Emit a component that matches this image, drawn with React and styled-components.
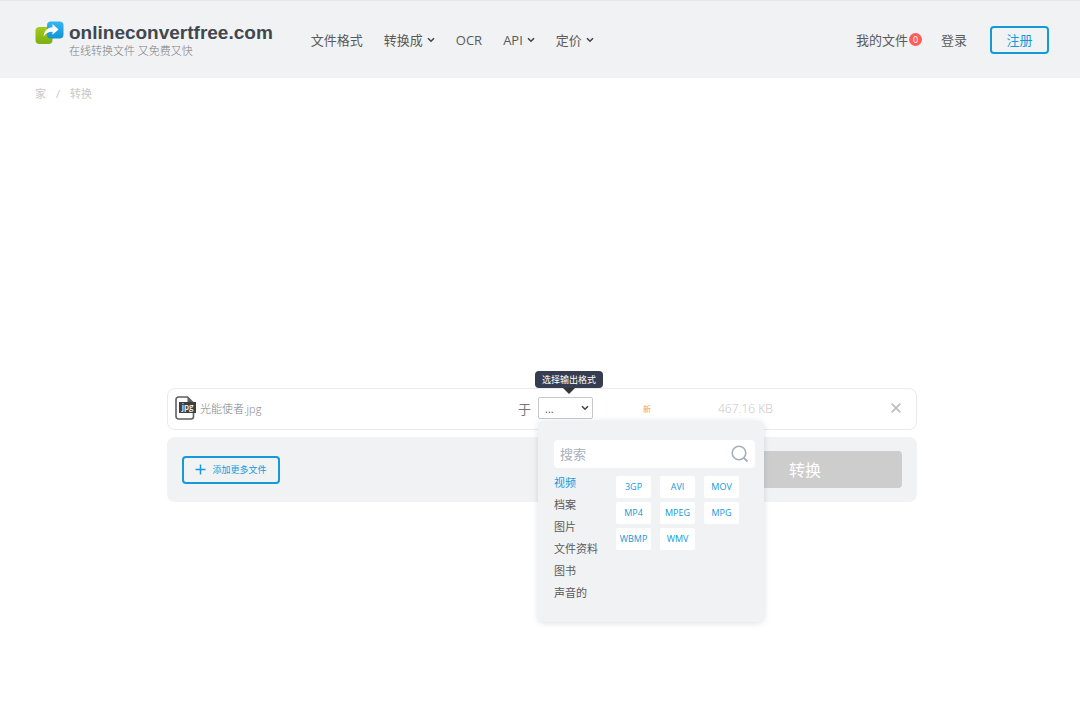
import React, { useState } from 'react'
import styled, { createGlobalStyle } from 'styled-components'

const GlobalStyle = createGlobalStyle`
    * {
        box-sizing: border-box;
    }
    body {
        margin: 0;
        background: #fff;
        color: #5a5a5a;
        font-family: "Open Sans", "Noto Sans CJK SC", sans-serif;
        font-size: 13px;
    }
    button, input, select {
        font-family: inherit;
        margin: 0;
    }
    a {
        color: inherit;
        text-decoration: none;
    }
`

const formats = {
    '视频': ['3GP', 'AVI', 'MOV', 'MP4', 'MPEG', 'MPG', 'WBMP', 'WMV'],
    '档案': ['7Z', 'ZIP', 'TAR'],
    '图片': ['BMP', 'GIF', 'PNG'],
    '文件资料': ['DOC', 'PDF', 'TXT'],
    '图书': ['EPUB', 'FB2', 'MOBI'],
    '声音的': ['AAC', 'MP3', 'WAV'],
}

const navItems = [
    { title: '文件格式' },
    { title: '转换成', menu: true },
    { title: 'OCR' },
    { title: 'API', menu: true },
    { title: '定价', menu: true },
]

function LogoIcon() {
    return (
        <svg width="29" height="24" viewBox="0 0 29 24" aria-hidden="true">
            <defs>
                <linearGradient id="green" x1="0" y1="0" x2="0" y2="1">
                    <stop offset="0" stopColor="#a2cc1c" />
                    <stop offset="1" stopColor="#7cb00f" />
                </linearGradient>
                <linearGradient id="blue" x1="0" y1="0" x2="0" y2="1">
                    <stop offset="0" stopColor="#35b6f2" />
                    <stop offset="1" stopColor="#1193d6" />
                </linearGradient>
            </defs>
            <rect x="0.5" y="6" width="17" height="17" rx="4" fill="url(#green)" />
            <rect x="12" y="0.5" width="16.5" height="17" rx="4" fill="url(#blue)" />
            <path d="M8.5 15.5C9.3 9.500 12.500 6.5 17.5 6.3V3L23.500 8.5L17.5 13.800V10.700C13.5 10.600 10.8 12 8.5 15.5Z" fill="#fff" />
        </svg>
    )
}

function Chevron() {
    return (
        <svg width="8" height="6" viewBox="0 0 8 6" aria-hidden="true">
            <path d="M1 1.2L4 4.2L7 1.2" fill="none" stroke="#444" strokeWidth="1.6" />
        </svg>
    )
}

function FileIcon() {
    return (
        <svg width="21" height="24" viewBox="0 0 21 24" aria-hidden="true">
            <path d="M12.5 1H3.5A2.5 2.5 0 0 0 1 3.5V20.5A2.5 2.5 0 0 0 3.5 23H16A2.5 2.5 0 0 0 18.500 20.500V7Z" fill="#fff" stroke="#5c6063" strokeWidth="1.6" />
            <path d="M12.500 1V7H18.500Z" fill="#5c6063" />
            <rect x="4" y="6" width="17" height="11" fill="#3f3f3f" />
            <text x="12.500" y="14" textAnchor="middle" fontSize="8" fontWeight="600" fill="#fff">jpg</text>
        </svg>
    )
}

function App() {
    const [category, setCategory] = useState('视频')

    return (
        <Page>
            <GlobalStyle />
            <Header>
                <Logo href="#">
                    <LogoIcon />
                    <LogoText>
                        <strong>onlineconvertfree.com</strong>
                        <small>在线转换文件 又免费又快</small>
                    </LogoText>
                </Logo>
                <Nav>
                    {navItems.map(item => (
                        <NavLink href="#" key={item.title}>
                            {item.title}
                            {item.menu && <Chevron />}
                        </NavLink>
                    ))}
                </Nav>
                <Account>
                    <NavLink href="#">我的文件<Badge>0</Badge></NavLink>
                    <NavLink href="#">登录</NavLink>
                    <SignUp>注册</SignUp>
                </Account>
            </Header>
            <Breadcrumbs>
                <a href="#">家</a>
                <span>/</span>
                <span>转换</span>
            </Breadcrumbs>
            <Converter>
                <FileRow>
                    <FileName>
                        <FileIcon />
                        光能使者.jpg
                    </FileName>
                    <Target>
                        <label htmlFor="format">于</label>
                        <SelectWrap>
                            <Tooltip role="tooltip">选择输出格式</Tooltip>
                            <Select id="format">
                                <option>...</option>
                            </Select>
                            <Chevron />
                            <Dropdown>
                                <Search>
                                    <input type="text" placeholder="搜索" aria-label="搜索" />
                                    <svg width="18" height="18" viewBox="0 0 18 18" aria-hidden="true">
                                        <circle cx="8" cy="8" r="6.800" fill="none" stroke="#a3afbb" strokeWidth="1.600" />
                                        <path d="M12.800 12.800L16.500 16.500" stroke="#a3afbb" strokeWidth="1.800" />
                                    </svg>
                                </Search>
                                <DropdownBody>
                                    <Categories>
                                        {Object.keys(formats).map(name => (
                                            <Category key={name} $active={name === category} onClick={() => setCategory(name)}>
                                                {name}
                                            </Category>
                                        ))}
                                    </Categories>
                                    <Formats>
                                        {formats[category].map(name => <Format key={name}>{name}</Format>)}
                                    </Formats>
                                </DropdownBody>
                            </Dropdown>
                        </SelectWrap>
                    </Target>
                    <Status>新</Status>
                    <Size>467.16 KB</Size>
                    <Remove aria-label="删除">
                        <svg width="10" height="10" viewBox="0 0 10 10" aria-hidden="true">
                            <path d="M0.700 0.700L9.300 9.300M9.300 0.700L0.700 9.300" stroke="#bdbdbd" strokeWidth="1.700" />
                        </svg>
                    </Remove>
                </FileRow>
                <Actions>
                    <AddFiles>
                        <svg width="11" height="11" viewBox="0 0 11 11" aria-hidden="true">
                            <path d="M5.500 0.500V10.500M0.500 5.500H10.500" stroke="#149ad9" strokeWidth="1.500" />
                        </svg>
                        添加更多文件
                    </AddFiles>
                    <Convert disabled>转换</Convert>
                </Actions>
            </Converter>
        </Page>
    )
}

const Page = styled.div`
    min-height: 100vh;
`

const Header = styled.header`
    display: flex;
    align-items: center;
    height: 78px;
    padding: 0 31px 0 35px;
    background: #f1f2f4;
    border-top: 1px solid #e6e7e9;
`

const Logo = styled.a`
    display: flex;
    align-items: flex-start;
    gap: 5px;
    margin-right: 38px;
    padding-bottom: 2px;
`

const LogoText = styled.span`
    display: flex;
    flex-direction: column;
    strong {
        color: #40474f;
        font-family: "Liberation Sans", Arial, sans-serif;
        font-size: 19px;
        line-height: 24px;
    }
    small {
        color: #808080;
        font-size: 11px;
        font-weight: 300;
        line-height: 11px;
    }
`

const Nav = styled.nav`
    display: flex;
    gap: 21px;
`

const NavLink = styled.a`
    display: flex;
    align-items: center;
    gap: 4px;
    line-height: 20px;
    white-space: nowrap;
`

const Account = styled.div`
    display: flex;
    align-items: center;
    gap: 19px;
    margin-left: auto;
    ${NavLink} {
        gap: 1px;
    }
`

const Badge = styled.span`
    width: 13px;
    height: 13px;
    border-radius: 50%;
    background: #ff5c5c;
    color: #fff;
    font-size: 9px;
    line-height: 13px;
    text-align: center;
`

const SignUp = styled.button`
    width: 59px;
    height: 28px;
    margin-left: 4px;
    padding: 0;
    background: transparent;
    border: 2px solid #149ad9;
    border-radius: 4px;
    color: #149ad9;
    font-size: 13px;
    line-height: 20px;
`

const Breadcrumbs = styled.nav`
    display: flex;
    gap: 10px;
    padding: 8px 35px;
    color: #c8c8c8;
    font-size: 11px;
    line-height: 16px;
`

const Converter = styled.main`
    width: 100%;
    max-width: 754px;
    margin: 278px auto 0;
    padding-left: 4px;
`

const FileRow = styled.div`
    display: grid;
    grid-template-columns: 350px 108px 75px 1fr 40px;
    align-items: center;
    height: 42px;
    padding-bottom: 2px;
    border: 1px solid #e9eaec;
    border-radius: 8px;
`

const FileName = styled.div`
    display: flex;
    align-items: center;
    gap: 4px;
    padding-left: 7px;
    color: #808080;
    font-size: 11px;
    font-weight: 300;
`

const Target = styled.div`
    display: flex;
    align-items: center;
    gap: 7px;
    color: #777;
`

const SelectWrap = styled.div`
    position: relative;
    > svg {
        position: absolute;
        top: 8px;
        right: 4px;
        pointer-events: none;
    }
`

const Select = styled.select`
    display: block;
    width: 55px;
    height: 22px;
    padding: 0 6px;
    appearance: none;
    background: #fff;
    border: 1px solid #c5c9ce;
    border-radius: 2px;
    color: #555;
    font-size: 11px;
`

const Tooltip = styled.span`
    position: absolute;
    bottom: 31px;
    left: -3px;
    padding: 0 7px;
    background: #373d50;
    border-radius: 4px;
    color: #fff;
    font-size: 9px;
    line-height: 17px;
    white-space: nowrap;
    &::after {
        content: "";
        position: absolute;
        top: 100%;
        left: 50%;
        margin-left: -6px;
        border: 6px solid transparent;
        border-top-color: #333;
        border-bottom: 0;
    }
`

const Dropdown = styled.div`
    position: absolute;
    top: 24px;
    left: 0;
    z-index: 2;
    width: 226px;
    padding: 19px 9px 18px 16px;
    background: #f1f2f4;
    border-radius: 6px;
    box-shadow: 0 1px 6px rgba(60, 80, 110, 0.18);
`

const Search = styled.div`
    display: flex;
    align-items: center;
    height: 28px;
    padding: 0 6px;
    background: #fff;
    border-radius: 4px;
    input {
        flex: 1;
        min-width: 0;
        padding: 0;
        border: 0;
        outline: 0;
        color: #555;
        font-size: 13px;
    }
    input::placeholder {
        color: #a9b0ba;
    }
`

const DropdownBody = styled.div`
    display: flex;
    gap: 18px;
    padding-top: 4px;
`

const Categories = styled.div`
    display: flex;
    flex-direction: column;
`

const Category = styled.button`
    padding: 0;
    background: none;
    border: 0;
    color: ${({ $active }) => ($active ? '#149ad9' : '#5a5a5a')};
    font-size: 11px;
    line-height: 22px;
    text-align: left;
    white-space: nowrap;
`

const Formats = styled.div`
    display: grid;
    grid-template-columns: repeat(3, 35px);
    grid-auto-rows: 22px;
    align-content: start;
    gap: 4px 9px;
    padding-top: 4px;
`

const Format = styled.button`
    padding: 0;
    background: #fff;
    border: 0;
    border-radius: 2px;
    color: #149ad9;
    font-size: 9px;
    line-height: 20px;
`

const Status = styled.span`
    padding-left: 17px;
    color: #f5a33c;
    font-size: 8px;
`

const Size = styled.span`
    padding-left: 17px;
    color: #c4c4c4;
    font-size: 12px;
    font-weight: 300;
`

const Remove = styled.button`
    display: flex;
    justify-content: center;
    padding: 0;
    background: none;
    border: 0;
`

const Actions = styled.div`
    display: flex;
    align-items: center;
    justify-content: space-between;
    height: 65px;
    margin-top: 7px;
    padding: 0 15px;
    background: #f1f2f4;
    border-radius: 8px;
`

const AddFiles = styled.button`
    display: flex;
    align-items: center;
    justify-content: center;
    gap: 6px;
    width: 98px;
    height: 28px;
    padding: 0;
    background: transparent;
    border: 2px solid #149ad9;
    border-radius: 4px;
    color: #149ad9;
    font-size: 9px;
`

const Convert = styled.button`
    width: 194px;
    height: 37px;
    padding: 0 0 2px;
    background: #cdcdcd;
    border: 0;
    border-radius: 4px;
    color: #fff;
    font-size: 16px;
`

export default App
